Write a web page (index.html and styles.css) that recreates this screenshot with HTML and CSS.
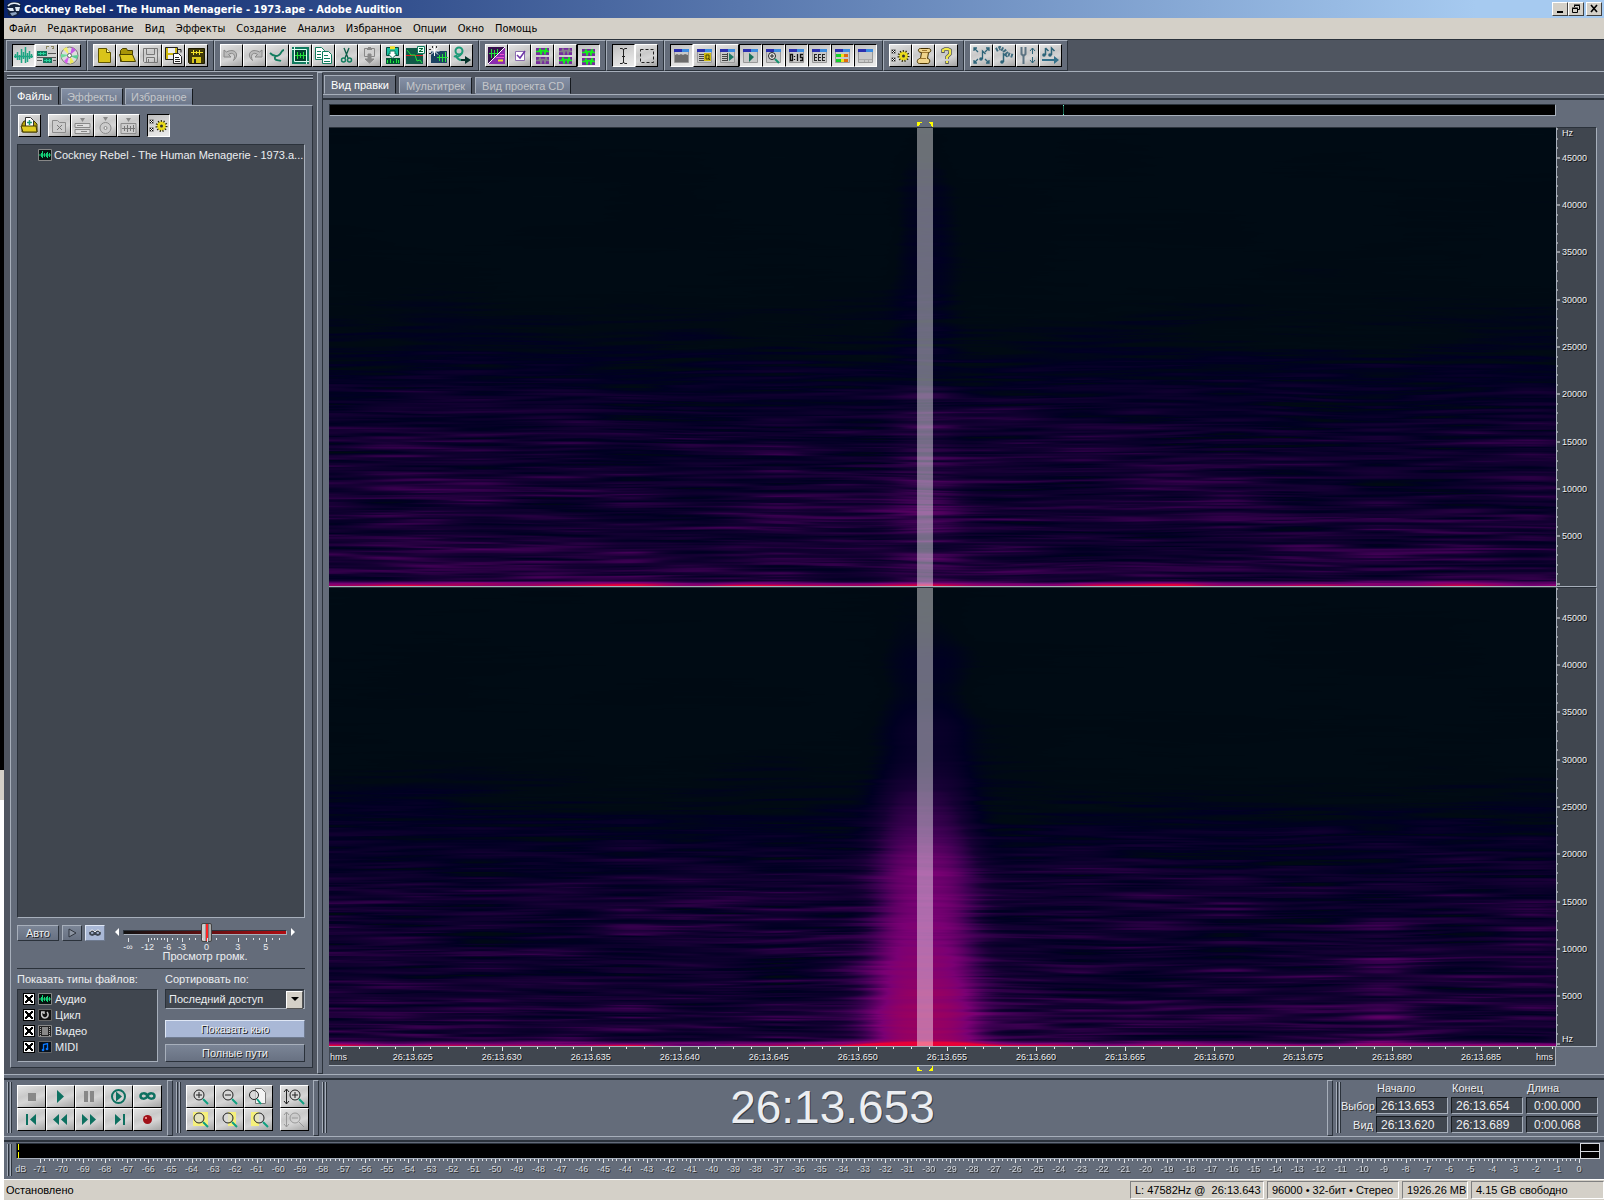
FILE: index.html
```html
<!DOCTYPE html>
<html lang="ru">
<head>
  <meta charset="UTF-8">
  <meta name="viewport" content="width=device-width, initial-scale=1.0">
  <title>Cockney Rebel - The Human Menagerie - 1973.ape - Adobe Audition</title>
  <link rel="stylesheet" href="styles.css">
</head>
<body>

  <!-- icon sheet -->
  <svg class="sheet" aria-hidden="true">
    <symbol id="wave" viewBox="0 0 21 21"><path d="M2.500 9v4M4.500 7v8M6.500 10v5M8.500 4v14M10.500 7v7M12.500 2v16M14.500 8v9M16.500 6v8M18.500 9v4M1 11.500h19" stroke="#1fa583" stroke-width="1.500"/></symbol>
    <symbol id="tracks" viewBox="0 0 21 21"><path d="M1 6h10v5H1zM7 13h9v5H7z" fill="#12795f"/><path d="M2 8.500h8M8 15.500h7M4.500 7v3M7.500 7v3M10.500 14v3M13.500 14v3" stroke="#27d39c"/><path d="M10 1h3v1h-2v2h-1zM15 1h3v3h-2V3h1V2h-2z" fill="#8a8560"/><path d="M12 8.500h8M1 15.500h5M17 15.500h3M1 12.500h19" stroke="#555"/></symbol>
    <symbol id="cd" viewBox="0 0 21 21"><circle cx="10.500" cy="10.500" r="8.500" fill="#ddd" stroke="#777"/><path d="M10 10L4 4l4-2z" fill="#f3f06a"/><path d="M11 10l2-8 4 3z" fill="#c45ae6"/><path d="M11 11l8-1-1 4z" fill="#58cf92"/><path d="M10 11l-2 8-3-3z" fill="#d65cf0"/><path d="M11 11l4 6-4 2z" fill="#eee95a"/><path d="M10 10l-8-1v4z" fill="#6fdc9c"/><circle cx="10.500" cy="10.500" r="2" fill="#fff" stroke="#666"/></symbol>
    <symbol id="new" viewBox="0 0 21 21"><path d="M4.500 3.500h8l4 4v10h-12z" fill="#d9c41a" stroke="#5e5400"/><path d="M12.500 3.500v4h4" fill="#fff6a0" stroke="#5e5400"/></symbol>
    <symbol id="open" viewBox="0 0 21 21"><path d="M3.500 16.500v-11l2-2h4l1 2h5v11z" fill="#a89408" stroke="#4a4200"/><path d="M4.500 16.500l-2-7h13l3 7z" fill="#dcc61c" stroke="#4a4200"/></symbol>
    <symbol id="save" viewBox="0 0 21 21"><path d="M3.500 3.500h14v14h-13l-1-1zM6.500 3.500v6h8v-6M6.500 17.500v-5h8v5" fill="none" stroke="#777"/><path d="M8.500 14v3" stroke="#777"/></symbol>
    <symbol id="saveas" viewBox="0 0 21 21"><path d="M2.500 2.500h12v12h-12z" fill="#cdb710" stroke="#222"/><path d="M5 3h7v5H5zM5 10h6v4H5z" fill="#eee"/><path d="M10.500 8.500h5l3 3v7h-8z" fill="#fff" stroke="#222"/><path d="M12 12.500h4M12 14.500h5M12 16.500h5M15 4.500h3v3" stroke="#222" fill="none"/></symbol>
    <symbol id="saveall" viewBox="0 0 21 21"><path d="M2.500 3.500h16v15h-15l-1-1z" fill="#403a08" stroke="#1d1a00"/><path d="M5 7.500h12M7.500 5v5M10.500 6v3M13.500 5v5" stroke="#f2e12a"/><path d="M6 12h9v6H6z" fill="#d9c61c"/><path d="M8 14h2v4H8z" fill="#222"/></symbol>
    <symbol id="undo" viewBox="0 0 21 21"><path d="M3 5v7h7l-2.500-2.500c4-3 8 0 5 6 7-6 1-13-7-8.500z" fill="#bbb" stroke="#888"/></symbol>
    <symbol id="redo" viewBox="0 0 21 21"><path d="M18 5v7h-7l2.500-2.500c-4-3-8 0-5 6-7-6-1-13 7-8.500z" fill="#bbb" stroke="#888"/></symbol>
    <symbol id="repeat" viewBox="0 0 21 21"><path d="M3 8c3 3 6 4 9 2s2-5 5-5M12 10c-3 1-5 2-4 4s4 1 6 2" fill="none" stroke="#127c5e" stroke-width="1.800"/></symbol>
    <symbol id="trim" viewBox="0 0 21 21"><path d="M2 2h17v17H2z" fill="#0f7a5e"/><path d="M5 5h11v11H5z" fill="#05402f"/><path d="M5 10.500h12M7.500 7v7M10.500 8v5M13.500 7v7" stroke="#22e23a"/><path d="M4.500 2v14.500H19M2 4.500h14.500V19" fill="none" stroke="#d9fff0"/></symbol>
    <symbol id="copy" viewBox="0 0 21 21"><path d="M2.500 2.500h6l3 3v9h-9z" fill="#fff" stroke="#127c5e"/><path d="M9.500 6.500h6l3 3v9h-9z" fill="#fff" stroke="#127c5e"/><path d="M4 6.500h4M4 9.500h4M4 12.500h4M11 10.500h4M11 13.500h6M11 16.500h6" stroke="#127c5e"/></symbol>
    <symbol id="cut" viewBox="0 0 21 21"><path d="M8 3l4 10M13 3L9 13" stroke="#0d5c48" stroke-width="1.300"/><circle cx="7.500" cy="15" r="2" fill="none" stroke="#127c5e" stroke-width="1.500"/><circle cx="13.500" cy="15" r="2" fill="none" stroke="#127c5e" stroke-width="1.500"/></symbol>
    <symbol id="paste" viewBox="0 0 21 21"><path d="M5.500 3.500h10v8h-10z" fill="#d0d0d0" stroke="#888"/><path d="M8 4.500h5M9 2.500h3M9 9h3v5h3l-4.500 4L6 14h3z" fill="#888" stroke="#888"/></symbol>
    <symbol id="pastenew" viewBox="0 0 21 21"><path d="M4.500 2.500h12v8h-12z" fill="#19bfa0" stroke="#08473a"/><path d="M8 3.500h5M8 2h5" stroke="#f3e02a" stroke-width="1.500"/><path d="M4 13h14v6H4z" fill="#053"/><path d="M5.500 18v-3M8.500 18v-4M11.500 18v-2M14.500 18v-4M16.500 18v-3" stroke="#22e23a"/><path d="M8 6h5v3h2l-4.500 4L6 9h2z" fill="#fff" stroke="#127c5e"/></symbol>
    <symbol id="zero" viewBox="0 0 21 21"><path d="M1 3h17v16H1z" fill="#0f5a48"/><path d="M1 10.500h17" stroke="#e02020"/><path d="M2 5l4 5h4l2 6 3-1 2 3" fill="none" stroke="#22e23a"/><path d="M12.500 1.500h7v7h-7z" fill="#e9fff8" stroke="#127c5e"/><path d="M14 3.500h4l-4 3h4" fill="none" stroke="#063"/></symbol>
    <symbol id="noise" viewBox="0 0 21 21"><path d="M3 6h16v12H3z" fill="#1b4262"/><path d="M9 12.500h11M11.500 10v6M14.500 9v8M17.500 7v10" stroke="#22e23a"/><path d="M6.500 1v10M1.500 6h10M3 2.500l7 7M10 2.500l-7 7" stroke="#fff"/><path d="M4.500 1v2M8.500 1v2M1 4.500h2M1 8.500h2" stroke="#333"/></symbol>
    <symbol id="convert" viewBox="0 0 21 21"><circle cx="8" cy="6" r="3.500" fill="none" stroke="#1c9b78" stroke-width="2"/><path d="M3 11c3 2 6 0 8-3M5 10c1 5 4 5 6 5" fill="none" stroke="#1c9b78" stroke-width="2"/><path d="M10 14h4v-3l6 4-6 4v-3h-4z" fill="#04332a"/></symbol>
    <symbol id="specview" viewBox="0 0 21 21"><path d="M2 2h17v17H2z" fill="#8b2ab0"/><path d="M2 2h17L2 19z" fill="#35104c"/><path d="M3 8.500h9M5.500 4v9M8.500 5v7M11.500 4v5" stroke="#22e23a"/><path d="M2 19L19 2" stroke="#fff"/><path d="M12 15.500h5" stroke="#f3e02a" stroke-width="2"/><path d="M14 9.500h4M10 12.500h8" stroke="#f050d0"/></symbol>
    <symbol id="check" viewBox="0 0 21 21"><path d="M6.500 6.500h9v9h-9z" fill="#fff" stroke="#8c6fb0"/><path d="M8 10l3 3 5-7" fill="none" stroke="#6d35a8" stroke-width="1.500"/></symbol>
    <symbol id="blip" viewBox="0 0 13 7"><path d="M0 3.500h3l1-3 1 6 1-4h2l1 3 1-5 1 3h2" fill="none" stroke-width="1.600"/></symbol>
    <symbol id="chan-l" viewBox="0 0 21 21"><path d="M4 3h13v7H4zM4 12h13v7H4z" fill="#762a9e"/><use href="#blip" x="4" y="3" width="13" height="7" stroke="#14ef1c"/><use href="#blip" x="4" y="12" width="13" height="7" stroke="#85808a"/></symbol>
    <symbol id="chan-r" viewBox="0 0 21 21"><path d="M4 3h13v7H4zM4 12h13v7H4z" fill="#762a9e"/><use href="#blip" x="4" y="3" width="13" height="7" stroke="#85808a"/><use href="#blip" x="4" y="12" width="13" height="7" stroke="#14ef1c"/></symbol>
    <symbol id="chan-b" viewBox="0 0 21 21"><path d="M4 4h13v7H4zM4 13h13v7H4z" fill="#762a9e"/><use href="#blip" x="4" y="4" width="13" height="7" stroke="#14ef1c"/><use href="#blip" x="4" y="13" width="13" height="7" stroke="#14ef1c"/></symbol>
    <symbol id="ibeam" viewBox="0 0 21 21"><path d="M7 3.500h2l1.500 1 1.500-1h2M7 18.500h2l1.500-1 1.500 1h2M10.500 4v14M9 11.500h3" fill="none" stroke="#222"/></symbol>
    <symbol id="marquee" viewBox="0 0 21 21"><path d="M4.500 4.500h13v13h-13z" fill="none" stroke="#222" stroke-dasharray="3 2"/></symbol>
    <symbol id="win" viewBox="0 0 21 21"><path d="M3.500 4.500h14v13h-14z" fill="#c9c9c9" stroke="#999"/><path d="M3 4h8v3H3z" fill="#2a2fb0"/><path d="M11 4h7v3h-7z" fill="#3b8be0"/></symbol>
    <symbol id="win-files" viewBox="0 0 21 21"><use href="#win"/><path d="M4 10l2-1 2 1 2-1 2 1 2-1 3 1v7H4z" fill="#6c6c6c"/></symbol>
    <symbol id="win-cue" viewBox="0 0 21 21"><use href="#win"/><path d="M5 9.500h6M5 11.500h5M5 13.500h5M5 15.500h6" stroke="#444"/><path d="M10 8h7v8h-7z" fill="#cdbb12"/><path d="M12 10h3v4h-3zM14 13l2 2" fill="none" stroke="#4c4400"/></symbol>
    <symbol id="win-list" viewBox="0 0 21 21"><use href="#win"/><path d="M5 9.500h6M5 11.500h5M5 13.500h5M5 15.500h6M10.500 8v8" stroke="#444"/><path d="M12 8l5 4-5 4z" fill="#1c7a66"/></symbol>
    <symbol id="win-play" viewBox="0 0 21 21"><use href="#win"/><path d="M9 8l5 4-5 5z" fill="#17705a"/></symbol>
    <symbol id="win-zoom" viewBox="0 0 21 21"><use href="#win"/><circle cx="9" cy="11" r="3.500" fill="#eee" stroke="#222"/><path d="M7 11h4M9 9v4" stroke="#222"/><path d="M12 14l4 4" stroke="#139370" stroke-width="2"/></symbol>
    <symbol id="win-time" viewBox="0 0 21 21"><use href="#win"/><path d="M4.500 9.500h2v6h-2zM8.500 11v1M8.500 14v1M11.500 9v7M17 9.500h-2.500v3h2v3h-2.500" fill="none" stroke="#111" stroke-width="1.300"/></symbol>
    <symbol id="win-sel" viewBox="0 0 21 21"><use href="#win"/><path d="M5 9.500h3M5 12.500h3M5 15.500h3M9 9.500h3M9 12.500h3M9 15.500h3M13 9.500h3M13 12.500h3M13 15.500h3M5.500 9v7M9.500 9v7M13.500 9v7" stroke="#222"/></symbol>
    <symbol id="win-level" viewBox="0 0 21 21"><use href="#win"/><path d="M4 9h5v3H4zM4 14h5v3H4z" fill="#12d22a"/><path d="M9 9h3v3H9zM9 14h3v3H9z" fill="#f2e020"/><path d="M12 9h4v3h-4zM12 14h4v3h-4z" fill="#e06a10"/></symbol>
    <symbol id="win-status" viewBox="0 0 21 21"><use href="#win"/><path d="M4 14.500h13M9.500 15v2M13.500 15v2" stroke="#aaa"/></symbol>
    <symbol id="gear" viewBox="0 0 21 21"><path d="M1.500 4.500h4v4h-4zM1.500 12.500h4v4h-4z" fill="#eee" stroke="#999"/><path d="M2 5l3 3M5 5L2 8M2 13l3 3M5 13l-3 3" stroke="#111"/><circle cx="13.500" cy="11" r="4.500" fill="#e8da1c" stroke="#2c2800" stroke-width="3" stroke-dasharray="1 1.500"/><circle cx="13.500" cy="11" r="4" fill="#e8da1c"/><circle cx="13.500" cy="11" r="1.500" fill="#333"/></symbol>
    <symbol id="script" viewBox="0 0 21 21"><path d="M7.500 3.500h8c3 0 3 4 0 4l-1 6c3 0 3 5 0 5h-8c-3 0-3-4 0-5h1l1-6c-4 0-4-4-1-4z" fill="#f0d48c" stroke="#473200"/><path d="M9 7.500h6M7 13.500h6M9 5.500h5" stroke="#a07830"/></symbol>
    <symbol id="help" viewBox="0 0 21 21"><path d="M7 8V5l2-1h3l2 1v4l-3 3v2M11 16v3" fill="none" stroke="#555" stroke-width="3.500"/><path d="M7 7V5l2-1h3l2 1v4l-3 3v2M11 16v2" fill="none" stroke="#f0e94a" stroke-width="2"/></symbol>
    <symbol id="note-out" viewBox="0 0 21 21"><path d="M3 6V3h3M15 3h3v3M3 15v3h3M18 15v3h-3M3 3l4 4M18 3l-4 4M3 18l4-4M18 18l-4-4M11.500 14V6l3 3" fill="none" stroke="#2d6479" stroke-width="1.300"/><circle cx="10" cy="14" r="1.800" fill="#2d6479"/></symbol>
    <symbol id="note-bend" viewBox="0 0 21 21"><path d="M2 5l4-2 4 2 3 4 6 2" fill="none" stroke="#3f6d80" stroke-width="4" stroke-dasharray="2 1"/><path d="M9.500 17V9l4 3" fill="none" stroke="#2d6479" stroke-width="1.500"/><circle cx="8" cy="17" r="1.800" fill="#2d6479"/></symbol>
    <symbol id="fork" viewBox="0 0 21 21"><path d="M4.500 2v7l2 2 2-2V2M6.500 11v8" fill="none" stroke="#5d7483" stroke-width="2"/><path d="M15.500 3v6M13 6l2.500-3L18 6M15.500 12v6M13 15l2.500 3 2.500-3" fill="none" stroke="#2d6479"/></symbol>
    <symbol id="note-move" viewBox="0 0 21 21"><path d="M5.500 10V3M11.500 10V3l3 3M5.500 3l3 3" fill="none" stroke="#2d6479" stroke-width="1.500"/><circle cx="4" cy="10" r="1.800" fill="#2d6479"/><circle cx="10" cy="10" r="1.800" fill="#2d6479"/><path d="M2 14h12v-3l5 4-5 4v-3H2z" fill="#33708a"/></symbol>
    <symbol id="import" viewBox="0 0 21 21"><path d="M3 17V9l2-3h10l3 3v8z" fill="#b5a00c" stroke="#453d00"/><path d="M6.500 2.500h5l3 3v6h-8z" fill="#fff" stroke="#333"/><path d="M10.500 5v5M8 7.500h5" stroke="#1d9878" stroke-width="1.500"/><path d="M2 11h15l1 6H4z" fill="#e0cc22" stroke="#453d00"/></symbol>
    <symbol id="close-file" viewBox="0 0 21 21"><path d="M3.500 17.500v-12h5l2 2h6v10z" fill="#ccc" stroke="#8b8b8b"/><path d="M8 10l5 5M13 10l-5 5" stroke="#777"/></symbol>
    <symbol id="ins-multi" viewBox="0 0 21 21"><path d="M3 8.500h15v4H3zM3 14.500h15v4H3z" fill="#ddd" stroke="#888"/><path d="M8 3h5l-2.500 4zM5 10h6v1H5zM9 16h6v1H9z" fill="#888"/></symbol>
    <symbol id="ins-cd" viewBox="0 0 21 21"><circle cx="10.500" cy="13" r="5.500" fill="#ccc" stroke="#8b8b8b"/><circle cx="10.500" cy="13" r="1.500" fill="#eee" stroke="#888"/><path d="M8 2h5l-2.500 4z" fill="#888"/></symbol>
    <symbol id="ins-wave" viewBox="0 0 21 21"><path d="M3 8.500h15v10H3z" fill="#ccc" stroke="#8b8b8b"/><path d="M8 3h5l-2.500 4z" fill="#888"/><path d="M4 13.500h13M6.500 11v5M9.500 10v7M12.500 11v5M15.500 10v7" stroke="#777"/></symbol>
    <symbol id="f-audio" viewBox="0 0 14 12"><path d="M.5.500h13v11H.5z" fill="#061410" stroke="#888"/><path d="M1 6h12M3.500 4v4M4.500 2v7M6.500 4v4M8.500 4v4M9.500 3v6M11.500 4v4" stroke="#12d478"/></symbol>
    <symbol id="f-loop" viewBox="0 0 14 12"><path d="M.5.500h13v11H.5z" fill="#111" stroke="#666"/><path d="M4 3c-1 3 0 6 3 6s4-4 2-6M3 3h3v2" fill="none" stroke="#ccc" stroke-width="1.500"/></symbol>
    <symbol id="f-video" viewBox="0 0 14 12"><path d="M.5.500h13v11H.5z" fill="#222" stroke="#888"/><path d="M4 2h6v8H4z" fill="#888"/><path d="M2.500 2v9M11.500 2v9" stroke="#aaa" stroke-dasharray="1 1"/></symbol>
    <symbol id="f-midi" viewBox="0 0 14 12"><path d="M.5.500h13v11H.5z" fill="#05101d" stroke="#666"/><path d="M5.500 9V3.500l4-1V8" fill="none" stroke="#0a78ff" stroke-width="1.300"/><circle cx="5" cy="9" r="1.300" fill="#0a78ff"/><circle cx="9" cy="8" r="1.300" fill="#0a78ff"/></symbol>
    <symbol id="t-stop" viewBox="0 0 27 21"><path d="M10 7h8v8h-8z" fill="#888"/></symbol>
    <symbol id="t-play" viewBox="0 0 27 21"><path d="M10 4l7 6.500-7 6.500z" fill="#0d7060"/></symbol>
    <symbol id="t-pause" viewBox="0 0 27 21"><path d="M8 5h4v11H8zM14 5h4v11h-4z" fill="#888"/></symbol>
    <symbol id="t-playend" viewBox="0 0 27 21"><circle cx="13.500" cy="10.500" r="6.500" fill="none" stroke="#0d7060" stroke-width="2"/><path d="M11 5.500l6 5-6 5z" fill="#0d7060"/></symbol>
    <symbol id="t-loop" viewBox="0 0 27 21"><path d="M13.500 10c-2-4-7-3-7 0s5 4 7 0 7-3 7 0-5 4-7 0z" fill="none" stroke="#0d7060" stroke-width="2.500"/></symbol>
    <symbol id="t-first" viewBox="0 0 27 21"><path d="M8 5h2v11H8zM18 5v11l-6-5.500z" fill="#0d7060"/></symbol>
    <symbol id="t-rew" viewBox="0 0 27 21"><path d="M12 5v11l-6-5.500zM20 5v11l-6-5.500z" fill="#0d7060"/></symbol>
    <symbol id="t-fwd" viewBox="0 0 27 21"><path d="M6 5v11l6-5.500zM14 5v11l6-5.500z" fill="#0d7060"/></symbol>
    <symbol id="t-last" viewBox="0 0 27 21"><path d="M10 5v11l6-5.500zM18 5h2v11h-2z" fill="#0d7060"/></symbol>
    <symbol id="t-rec" viewBox="0 0 27 21"><circle cx="13.500" cy="10.500" r="4.500" fill="#a01018"/><path d="M11 8h2v2h-2z" fill="#e88"/></symbol>
    <symbol id="lens" viewBox="0 0 27 21"><circle cx="12" cy="9" r="5" fill="#ddd" fill-opacity=".7" stroke="#222"/><path d="M16 13l5 5" stroke="#0ea080" stroke-width="2"/></symbol>
    <symbol id="z-in" viewBox="0 0 27 21"><use href="#lens"/><path d="M9 9h6M12 6v6" stroke="#222"/></symbol>
    <symbol id="z-out" viewBox="0 0 27 21"><use href="#lens"/><path d="M9 9h6" stroke="#222"/></symbol>
    <symbol id="z-full" viewBox="0 0 27 21"><path d="M10.500 2.500h6l4 4v11h-10z" fill="#f4f4f4" stroke="#777"/><circle cx="9" cy="9" r="4.500" fill="#ddd" fill-opacity=".7" stroke="#222"/><path d="M12 13l4 5" stroke="#0ea080" stroke-width="2"/></symbol>
    <symbol id="z-sel" viewBox="0 0 27 21"><path d="M6 3h15v14H6z" fill="#f5f07c"/><use href="#lens"/></symbol>
    <symbol id="z-right" viewBox="0 0 27 21"><path d="M12 3h8v14h-8z" fill="#f5f07c"/><use href="#lens"/></symbol>
    <symbol id="z-left" viewBox="0 0 27 21"><path d="M6 3h8v14H6z" fill="#f5f07c"/><use href="#lens" x="2"/></symbol>
    <symbol id="z-vin" viewBox="0 0 27 21"><path d="M5.500 3v15M3 6l2.500-3L8 6M3 15l2.500 3L8 15" fill="none" stroke="#222"/><use href="#lens" x="2"/><path d="M11 9h6M14 6v6" stroke="#222"/></symbol>
    <symbol id="z-vout" viewBox="0 0 27 21"><path d="M5.500 3v15M3 6l2.500-3L8 6M3 15l2.500 3L8 15M11 9h6M18 13l5 5" fill="none" stroke="#999"/><circle cx="14" cy="9" r="5" fill="none" stroke="#999"/></symbol>
  </svg>

  <div class="desktop-edge"></div>

  <div class="app">
    <header class="title-bar">
      <svg class="app-icon" viewBox="0 0 16 16"><path d="M1 3l4-2h9l1 4-2 8-5 3-6-2z" fill="#14233d"/><path d="M2 5c2-3 9-4 12-1" fill="none" stroke="#e8eef5" stroke-width="1.500"/><path d="M1 7h6l1 3H4zM9 6h5l-1 4h-3z" fill="#dfe8f2"/><path d="M4 12l6-1 1 2-5 2z" fill="#8da4c4"/></svg>
      <h1>Cockney Rebel - The Human Menagerie - 1973.ape - Adobe Audition</h1>
      <div class="window-buttons">
        <button type="button" aria-label="Свернуть"><svg viewBox="0 0 12 10"><path d="M3 7h6v2H3z"/></svg></button>
        <button type="button" aria-label="Восстановить"><svg viewBox="0 0 12 10"><path d="M4.500 3V1.500h5v4H8M2.500 4.500h5v4h-5zM4 1h6M2 4h6" fill="none" stroke="#000"/></svg></button>
        <button type="button" class="close" aria-label="Закрыть"><svg viewBox="0 0 12 10"><path d="M3 1l6 7M9 1L3 8" stroke="#000" stroke-width="1.600"/></svg></button>
      </div>
    </header>

    <nav class="menu-bar">
      <button type="button">Файл</button>
      <button type="button">Редактирование</button>
      <button type="button">Вид</button>
      <button type="button">Эффекты</button>
      <button type="button">Создание</button>
      <button type="button">Анализ</button>
      <button type="button">Избранное</button>
      <button type="button">Опции</button>
      <button type="button">Окно</button>
      <button type="button">Помощь</button>
    </nav>

    <div class="toolbar">
      <div class="tool-group">
        <button type="button" class="tool on" aria-label="Правка"><svg><use href="#wave"/></svg></button>
        <button type="button" class="tool" aria-label="Мультитрек"><svg><use href="#tracks"/></svg></button>
        <button type="button" class="tool" aria-label="CD"><svg><use href="#cd"/></svg></button>
      </div>
      <div class="tool-group">
        <button type="button" class="tool" aria-label="Новый"><svg><use href="#new"/></svg></button>
        <button type="button" class="tool" aria-label="Открыть"><svg><use href="#open"/></svg></button>
        <button type="button" class="tool" aria-label="Сохранить"><svg><use href="#save"/></svg></button>
        <button type="button" class="tool" aria-label="Сохранить как"><svg><use href="#saveas"/></svg></button>
        <button type="button" class="tool" aria-label="Сохранить все"><svg><use href="#saveall"/></svg></button>
      </div>
      <div class="tool-group">
        <button type="button" class="tool" aria-label="Отменить"><svg><use href="#undo"/></svg></button>
        <button type="button" class="tool" aria-label="Вернуть"><svg><use href="#redo"/></svg></button>
        <button type="button" class="tool" aria-label="Повторить"><svg><use href="#repeat"/></svg></button>
        <button type="button" class="tool" aria-label="Обрезать"><svg><use href="#trim"/></svg></button>
        <button type="button" class="tool" aria-label="Копировать"><svg><use href="#copy"/></svg></button>
        <button type="button" class="tool" aria-label="Вырезать"><svg><use href="#cut"/></svg></button>
        <button type="button" class="tool" aria-label="Вставить"><svg><use href="#paste"/></svg></button>
        <button type="button" class="tool" aria-label="Вставить в новый"><svg><use href="#pastenew"/></svg></button>
        <button type="button" class="tool" aria-label="Нулевые точки"><svg><use href="#zero"/></svg></button>
        <button type="button" class="tool" aria-label="Шумоподавление"><svg><use href="#noise"/></svg></button>
        <button type="button" class="tool" aria-label="Преобразовать"><svg><use href="#convert"/></svg></button>
      </div>
      <div class="tool-group">
        <button type="button" class="tool" aria-label="Спектр"><svg><use href="#specview"/></svg></button>
        <button type="button" class="tool" aria-label="Отметка"><svg><use href="#check"/></svg></button>
        <button type="button" class="tool" aria-label="Левый канал"><svg><use href="#chan-l"/></svg></button>
        <button type="button" class="tool" aria-label="Правый канал"><svg><use href="#chan-r"/></svg></button>
        <button type="button" class="tool on" aria-label="Оба канала"><svg><use href="#chan-b"/></svg></button>
      </div>
      <div class="tool-group">
        <button type="button" class="tool on" aria-label="Выделение времени"><svg><use href="#ibeam"/></svg></button>
        <button type="button" class="tool" aria-label="Рамка"><svg><use href="#marquee"/></svg></button>
      </div>
      <div class="tool-group">
        <button type="button" class="tool on" aria-label="Окно файлов"><svg><use href="#win-files"/></svg></button>
        <button type="button" class="tool" aria-label="Список кью"><svg><use href="#win-cue"/></svg></button>
        <button type="button" class="tool" aria-label="Список воспроизведения"><svg><use href="#win-list"/></svg></button>
        <button type="button" class="tool on" aria-label="Транспорт"><svg><use href="#win-play"/></svg></button>
        <button type="button" class="tool on" aria-label="Масштаб"><svg><use href="#win-zoom"/></svg></button>
        <button type="button" class="tool on" aria-label="Время"><svg><use href="#win-time"/></svg></button>
        <button type="button" class="tool on" aria-label="Выбор и вид"><svg><use href="#win-sel"/></svg></button>
        <button type="button" class="tool on" aria-label="Уровни"><svg><use href="#win-level"/></svg></button>
        <button type="button" class="tool on" aria-label="Строка состояния"><svg><use href="#win-status"/></svg></button>
      </div>
      <div class="tool-group">
        <button type="button" class="tool" aria-label="Настройки"><svg><use href="#gear"/></svg></button>
        <button type="button" class="tool" aria-label="Сценарии"><svg><use href="#script"/></svg></button>
        <button type="button" class="tool" aria-label="Справка"><svg><use href="#help"/></svg></button>
      </div>
      <div class="tool-group">
        <button type="button" class="tool" aria-label="Растяжение"><svg><use href="#note-out"/></svg></button>
        <button type="button" class="tool" aria-label="Изгиб"><svg><use href="#note-bend"/></svg></button>
        <button type="button" class="tool" aria-label="Высота тона"><svg><use href="#fork"/></svg></button>
        <button type="button" class="tool" aria-label="Сдвиг"><svg><use href="#note-move"/></svg></button>
      </div>
    </div>

    <div class="middle">
      <aside class="dock">
        <div class="grip-h"></div>
        <div class="tabs">
          <button type="button" class="tab active">Файлы</button>
          <button type="button" class="tab">Эффекты</button>
          <button type="button" class="tab">Избранное</button>
        </div>
        <div class="organizer">
          <div class="file-tools">
            <button type="button" class="tool" aria-label="Импорт"><svg><use href="#import"/></svg></button>
            <div class="file-tools-set">
              <button type="button" class="tool" aria-label="Закрыть файл"><svg><use href="#close-file"/></svg></button>
              <button type="button" class="tool" aria-label="В мультитрек"><svg><use href="#ins-multi"/></svg></button>
              <button type="button" class="tool" aria-label="В проект CD"><svg><use href="#ins-cd"/></svg></button>
              <button type="button" class="tool" aria-label="Правка файла"><svg><use href="#ins-wave"/></svg></button>
            </div>
            <button type="button" class="tool on" aria-label="Параметры"><svg><use href="#gear"/></svg></button>
          </div>

          <ul class="file-list">
            <li><svg class="file-icon"><use href="#f-audio"/></svg>Cockney Rebel - The Human Menagerie - 1973.a...</li>
          </ul>

          <div class="preview">
            <button type="button" class="flat auto">Авто</button>
            <button type="button" class="flat small" aria-label="Воспроизвести"><svg viewBox="0 0 18 14"><path d="M6 3l7 4-7 4z" fill="#8c94a2" stroke="#2f353e"/></svg></button>
            <button type="button" class="flat small lit" aria-label="Цикл"><svg viewBox="0 0 18 14"><path d="M9 7c-2-3-5-2-5 0s3 3 5 0 5-2 5 0-3 3-5 0z" fill="none" stroke="#3c4450" stroke-width="2"/><path d="M9 6c-2-3-5-2-5 0M9 6c2-3 5-2 5 0" fill="none" stroke="#fff"/></svg></button>
            <div class="volume">
              <div class="volume-row">
                <i class="arrow left"></i>
                <input type="range" id="volume" min="0" max="100" value="51">
                <i class="arrow right"></i>
              </div>
              <div class="volume-scale" id="volumeScale"></div>
              <label for="volume">Просмотр громк.</label>
            </div>
          </div>

          <div class="filters">
            <fieldset class="types">
              <legend>Показать типы файлов:</legend>
              <div class="types-box">
                <label><input type="checkbox" checked><svg class="file-icon"><use href="#f-audio"/></svg>Аудио</label>
                <label><input type="checkbox" checked><svg class="file-icon"><use href="#f-loop"/></svg>Цикл</label>
                <label><input type="checkbox" checked><svg class="file-icon"><use href="#f-video"/></svg>Видео</label>
                <label><input type="checkbox" checked><svg class="file-icon"><use href="#f-midi"/></svg>MIDI</label>
              </div>
            </fieldset>
            <div class="sorting">
              <label for="sort">Сортировать по:</label>
              <div class="select-box">
                <select id="sort"><option>Последний доступ</option></select>
              </div>
              <button type="button" class="flat lit wide">Показать кью</button>
              <button type="button" class="flat wide">Полные пути</button>
            </div>
          </div>
        </div>
      </aside>

      <div class="splitter-v"></div>

      <main class="editor">
        <div class="tabs view-tabs">
          <button type="button" class="tab active">Вид правки</button>
          <button type="button" class="tab">Мультитрек</button>
          <button type="button" class="tab">Вид проекта CD</button>
        </div>
        <div class="splitter-h"></div>
        <div class="workspace">
          <div class="overview"><i></i></div>
          <div class="marks top"><i></i></div>
          <div class="channel"><canvas id="left"></canvas><i class="selection"></i></div>
          <div class="ruler-f" data-unit="top"></div>
          <div class="channel"><canvas id="right"></canvas><i class="selection"></i></div>
          <div class="ruler-f" data-unit="bottom"></div>
          <div class="ruler-t" id="timeRuler"><span class="unit">hms</span><span class="unit">hms</span></div>
          <div class="marks bottom"><i></i></div>
        </div>
      </main>
    </div>

    <div class="splitter-h"></div>

    <div class="panels">
      <div class="grip-v"></div>
      <div class="transport">
        <button type="button" class="tool" aria-label="Стоп"><svg><use href="#t-stop"/></svg></button>
        <button type="button" class="tool" aria-label="Пуск"><svg><use href="#t-play"/></svg></button>
        <button type="button" class="tool" aria-label="Пауза"><svg><use href="#t-pause"/></svg></button>
        <button type="button" class="tool" aria-label="До конца"><svg><use href="#t-playend"/></svg></button>
        <button type="button" class="tool" aria-label="По кругу"><svg><use href="#t-loop"/></svg></button>
        <button type="button" class="tool" aria-label="В начало"><svg><use href="#t-first"/></svg></button>
        <button type="button" class="tool" aria-label="Назад"><svg><use href="#t-rew"/></svg></button>
        <button type="button" class="tool" aria-label="Вперед"><svg><use href="#t-fwd"/></svg></button>
        <button type="button" class="tool" aria-label="В конец"><svg><use href="#t-last"/></svg></button>
        <button type="button" class="tool" aria-label="Запись"><svg><use href="#t-rec"/></svg></button>
      </div>
      <div class="splitter-v"></div>
      <div class="grip-v"></div>
      <div class="zoom">
        <button type="button" class="tool" aria-label="Крупнее"><svg><use href="#z-in"/></svg></button>
        <button type="button" class="tool" aria-label="Мельче"><svg><use href="#z-out"/></svg></button>
        <button type="button" class="tool" aria-label="Целиком"><svg><use href="#z-full"/></svg></button>
        <button type="button" class="tool" aria-label="К выделению"><svg><use href="#z-sel"/></svg></button>
        <button type="button" class="tool" aria-label="К правому краю"><svg><use href="#z-right"/></svg></button>
        <button type="button" class="tool" aria-label="К левому краю"><svg><use href="#z-left"/></svg></button>
      </div>
      <div class="zoom vertical">
        <button type="button" class="tool" aria-label="Выше"><svg><use href="#z-vin"/></svg></button>
        <button type="button" class="tool" aria-label="Ниже"><svg><use href="#z-vout"/></svg></button>
      </div>
      <div class="splitter-v"></div>
      <div class="grip-v"></div>
      <div class="clock">26:13.653</div>
      <div class="splitter-v"></div>
      <div class="grip-v tight"></div>
      <div class="sel-view">
        <span></span><span class="head">Начало</span><span class="head">Конец</span><span class="head">Длина</span>
        <span class="side">Выбор</span>
        <input type="text" value="26:13.653" aria-label="Выбор начало">
        <input type="text" value="26:13.654" aria-label="Выбор конец">
        <input type="text" value="0:00.000" class="len" aria-label="Выбор длина">
        <span class="side">Вид</span>
        <input type="text" value="26:13.620" aria-label="Вид начало">
        <input type="text" value="26:13.689" aria-label="Вид конец">
        <input type="text" value="0:00.068" class="len" aria-label="Вид длина">
      </div>
    </div>

    <div class="splitter-h"></div>

    <div class="levels">
      <div class="grip-v"></div>
      <div class="meter">
        <div class="meter-row">
          <div class="meter-bar"><i></i></div>
          <div class="clip"><i></i><i></i></div>
        </div>
        <div class="meter-scale" id="dbRuler"></div>
      </div>
    </div>

    <footer class="status-bar">
      <span class="state">Остановлено</span>
      <span class="cell pos">L: 47582Hz @ &nbsp;26:13.643</span>
      <span class="cell format">96000 • 32-бит • Стерео</span>
      <span class="cell size">1926.26 MB</span>
      <span class="cell free">4.15 GB свободно</span>
    </footer>
  </div>

  <script src="script.js"></script>
</body>
</html>
```
FILE: styles.css
```css
* {
  margin: 0;
  padding: 0;
  box-sizing: border-box;
}

:root {
  --panel: #646c7a;
  --frame: #4f5560;
  --well: #40464f;
  --light: #a7afbb;
  --dark: #2b323b;
  --text: #eceef1;
  --menu: #d4d0c8;
}

body {
  display: flex;
  height: 100vh;
  overflow: hidden;
  background: var(--menu);
  font-family: "Liberation Sans", Arial, sans-serif;
  font-size: 11px;
  color: var(--text);
}

button,
input,
select {
  font: inherit;
  color: inherit;
  border: none;
  background: none;
}

svg,
canvas {
  display: block;
}

.sheet {
  position: absolute;
  width: 0;
  height: 0;
}

.desktop-edge {
  flex: none;
  width: 4px;
  background: linear-gradient(#000 64.2%, #d4d0c8 64.2% 66.7%, #fff 66.7%);
}

.app {
  flex: 1;
  min-width: 0;
  display: flex;
  flex-direction: column;
}

/* Title and menu */
.title-bar {
  display: flex;
  align-items: center;
  gap: 2px;
  height: 18px;
  padding: 0 2px;
  background: linear-gradient(to right, #0a246a, #a6caf0 92%);
}

.app-icon {
  width: 16px;
  height: 16px;
}

.title-bar h1 {
  flex: 1;
  font: bold 11px "DejaVu Sans Condensed", "DejaVu Sans", sans-serif;
  color: #fff;
  white-space: nowrap;
}

.window-buttons {
  display: flex;
}

.window-buttons button {
  width: 16px;
  height: 14px;
  padding: 1px;
  background: var(--menu);
  border: 1px solid;
  border-color: #fff #404040 #404040 #fff;
}

.window-buttons .close {
  margin-left: 2px;
}

.menu-bar {
  display: flex;
  gap: 11px;
  height: 21px;
  padding: 0 5px;
  background: var(--menu);
  font: 11px "DejaVu Sans Condensed", "DejaVu Sans", sans-serif;
  color: #000;
}

/* Toolbar */
.toolbar {
  display: flex;
  height: 33px;
  padding-left: 2px;
  background: var(--frame);
  border-top: 1px solid var(--dark);
  border-bottom: 1px solid var(--light);
}

.tool-group {
  display: flex;
  align-items: center;
  padding: 0 5px;
  background: var(--panel);
  border: 1px solid;
  border-color: var(--light) var(--dark) var(--dark) var(--light);
}

.tool {
  display: flex;
  align-items: center;
  justify-content: center;
  width: 23px;
  height: 23px;
  background: linear-gradient(160deg, #e3e3e3, #c9c9c9 40%, #d6d6d6 60%, #a4a4a4);
  border: 1px solid;
  border-color: #fff #000 #000 #fff;
}

.tool svg {
  width: 21px;
  height: 21px;
}

.tool.on {
  background: linear-gradient(160deg, #bdbdbd, #d8d8d8 50%, #ededed);
  border-color: #000 #fff #fff #000;
}

/* Splitters and grips */
.splitter-v {
  flex: none;
  width: 6px;
  background: var(--panel);
  border: 1px solid;
  border-color: var(--light) var(--dark) var(--dark) var(--light);
}

.splitter-h {
  flex: none;
  height: 6px;
  background: var(--panel);
  border-top: 1px solid var(--light);
  border-bottom: 2px solid var(--dark);
}

.grip-h {
  flex: none;
  height: 5px;
  margin: 3px 4px 6px 3px;
  background: linear-gradient(var(--light) 1px, var(--dark) 1px 2px, var(--panel) 2px 3px, var(--light) 3px 4px, var(--dark) 4px);
}

.grip-v {
  flex: none;
  width: 5px;
  margin: 2px 5px 3px 3px;
  background: linear-gradient(to right, var(--light) 1px, var(--dark) 1px 2px, var(--panel) 2px 3px, var(--light) 3px 4px, var(--dark) 4px);
}

.grip-v.tight {
  margin-right: 0;
}

/* Tabs */
.tabs {
  display: flex;
  align-items: flex-end;
  gap: 2px;
}

.tab {
  height: 17px;
  padding: 0 5px;
  background: linear-gradient(#8490a6, #6e788a);
  border: 1px solid;
  border-color: var(--light) #15191e transparent var(--light);
  color: #c4c6ca;
  white-space: nowrap;
}

.tab.active {
  height: 19px;
  padding: 0 6px;
  background: var(--panel);
  color: #fff;
}

/* Left dock */
.middle {
  flex: 1;
  min-height: 0;
  display: flex;
  background: var(--frame);
}

.dock {
  flex: none;
  display: flex;
  flex-direction: column;
  width: 313px;
}

.dock .tabs {
  padding-left: 6px;
}

.organizer {
  flex: 1;
  min-height: 0;
  display: flex;
  flex-direction: column;
  margin: 0 4px 6px 6px;
  padding: 8px 7px 5px 6px;
  background: var(--panel);
  border: 1px solid;
  border-color: var(--light) var(--dark) var(--dark) var(--light);
}

.file-tools {
  display: flex;
  gap: 7px;
  margin-bottom: 7px;
  padding-left: 1px;
}

.file-tools-set {
  display: flex;
}

.file-list {
  flex: 1;
  padding: 3px 0 0 20px;
  list-style: none;
  background: var(--well);
  border: 1px solid;
  border-color: var(--dark) var(--light) var(--light) var(--dark);
  white-space: nowrap;
  overflow: hidden;
}

.file-list li {
  display: flex;
  align-items: center;
  gap: 2px;
  height: 14px;
}

.file-icon {
  width: 14px;
  height: 12px;
}

.preview {
  display: flex;
  align-items: flex-start;
  gap: 3px;
  height: 51px;
  margin: 0 0 4px;
  padding-top: 7px;
  border-bottom: 1px solid var(--dark);
}

.flat {
  height: 16px;
  background: linear-gradient(#7b8596, #687182);
  border: 1px solid;
  border-color: var(--light) var(--dark) var(--dark) var(--light);
  text-shadow: 1px 1px 0 #222;
}

.flat.lit {
  background: #a9b8d6;
  border-color: #dfe7f5 #6f7b90 #6f7b90 #dfe7f5;
}

.auto {
  width: 42px;
}

.small {
  width: 20px;
}

.wide {
  height: 18px;
}

.volume {
  flex: 1;
  margin: 0 10px 0 7px;
  text-align: center;
}

.volume label {
  display: block;
  line-height: 11px;
}

.volume-row {
  display: flex;
  align-items: center;
  gap: 4px;
  height: 14px;
}

.arrow {
  border: 4px solid transparent;
}

.arrow.left {
  border-right-color: #fff;
  border-left-width: 0;
}

.arrow.right {
  border-left-color: #fff;
  border-right-width: 0;
}

.volume input {
  flex: 1;
  min-width: 0;
  height: 18px;
  appearance: none;
}

.volume input::-webkit-slider-runnable-track {
  height: 5px;
  background: linear-gradient(to right, #111, #b00d12);
  border: 1px solid;
  border-color: var(--dark) var(--light) var(--light) var(--dark);
}

.volume input::-webkit-slider-thumb {
  appearance: none;
  width: 11px;
  height: 19px;
  margin-top: -8px;
  background: linear-gradient(to right, #ccc 3px, #999 3px 4px, #f22 4px 6px, #777 6px 7px, #aaa 7px);
  border: 1px solid #444;
  border-radius: 2px;
}

.volume-scale {
  position: relative;
  height: 12px;
  margin: 0 8px;
  font-size: 9px;
}

.volume-scale span {
  position: absolute;
  top: 0;
  padding-top: 3px;
  transform: translateX(-50%);
  line-height: 10px;
}

.volume-scale i {
  position: absolute;
  top: -1px;
  width: 1px;
  height: 2px;
  background: #dfe2e7;
}

.volume-scale .major {
  height: 4px;
}

.filters {
  display: flex;
  gap: 7px;
}

.types {
  width: 141px;
  border: none;
}

.types legend,
.sorting > label {
  display: block;
  height: 16px;
  line-height: 13px;
  white-space: nowrap;
}

.types-box {
  height: 73px;
  padding: 1px 5px;
  background: var(--well);
  border: 1px solid;
  border-color: var(--dark) var(--light) var(--light) var(--dark);
}

.types-box label {
  display: flex;
  align-items: center;
  gap: 3px;
  height: 16px;
}

.types-box input {
  appearance: none;
  width: 12px;
  height: 12px;
  border: 1px solid #000;
  background: #fff;
}

.types-box input:checked {
  background:
    linear-gradient(45deg, transparent 41%, #000 41% 59%, transparent 59%) center / 8px 8px no-repeat,
    linear-gradient(-45deg, transparent 41%, #000 41% 59%, transparent 59%) center / 8px 8px no-repeat,
    #fff;
}

.sorting {
  flex: 1;
  display: flex;
  flex-direction: column;
  gap: 6px;
}

.sorting > label {
  margin-bottom: -6px;
}

.select-box {
  position: relative;
  height: 20px;
  margin-bottom: 5px;
  background: var(--well);
  border: 1px solid;
  border-color: var(--dark) var(--light) var(--light) var(--dark);
}

.select-box select {
  width: 100%;
  height: 18px;
  padding-left: 3px;
  appearance: none;
}

.select-box::before {
  content: "";
  position: absolute;
  top: 1px;
  right: 1px;
  width: 15px;
  height: 16px;
  background: var(--menu);
  border: 1px solid;
  border-color: #fff #555 #555 #fff;
  pointer-events: none;
}

.select-box::after {
  content: "";
  position: absolute;
  top: 7px;
  right: 5px;
  border: 4px solid transparent;
  border-top-color: #000;
  border-bottom-width: 0;
  pointer-events: none;
}

/* Editor */
.editor {
  flex: 1;
  min-width: 0;
  display: flex;
  flex-direction: column;
  background: var(--panel);
}

.view-tabs {
  flex: none;
  gap: 3px;
  height: 22px;
  padding-left: 1px;
  background: var(--frame);
}

.view-tabs .tab {
  padding: 0 6px;
}

.workspace {
  flex: 1;
  min-height: 0;
  display: grid;
  grid-template-columns: minmax(0, 1fr) 41px;
  grid-template-rows: 12px 11px minmax(0, 1fr) minmax(0, 1fr) 19px 8px;
  padding: 4px 7px 0 6px;
}

.overview,
.marks,
.ruler-t {
  grid-column: 1 / -1;
  margin-right: 41px;
}

.overview {
  background: #000;
  border: 1px solid;
  border-color: var(--dark) var(--light) var(--light) var(--dark);
}

.overview i {
  display: block;
  width: 1px;
  height: 100%;
  margin-left: 59.8%;
  background: #1c6b55;
  border: solid #6df0cf;
  border-width: 1px 0;
}

.marks {
  display: flex;
}

.marks i {
  width: 16px;
  height: 5px;
  margin-left: 47.9%;
}

.marks.top i {
  align-self: flex-end;
  background:
    linear-gradient(135deg, #ff0 50%, transparent 50%) left / 5px 5px no-repeat,
    linear-gradient(-135deg, #ff0 50%, transparent 50%) right / 5px 5px no-repeat;
}

.marks.bottom i {
  background:
    linear-gradient(45deg, #ff0 50%, transparent 50%) left / 5px 5px no-repeat,
    linear-gradient(-45deg, #ff0 50%, transparent 50%) right / 5px 5px no-repeat;
}

.channel {
  position: relative;
  background: #000c15;
  border-top: 1px solid var(--dark);
  border-bottom: 1px solid var(--light);
}

.channel canvas {
  width: 100%;
  height: 100%;
}

.selection {
  position: absolute;
  top: 0;
  bottom: 0;
  left: 47.9%;
  width: 16px;
  background: rgba(255, 255, 255, 0.42);
}

.ruler-f,
.ruler-t {
  position: relative;
  background: var(--well);
  font-size: 9px;
  text-shadow: 1px 1px 0 #111;
}

.ruler-f {
  border: 1px solid;
  border-color: var(--dark) var(--light) var(--light);
}

.ruler-t {
  border-right: 1px solid var(--light);
  border-bottom: 1px solid var(--light);
}

.ruler-f span,
.ruler-f i {
  position: absolute;
  transform: translateY(-50%);
}

.ruler-f span {
  left: 5px;
}

.ruler-f i {
  left: 0;
  width: 1px;
  height: 1px;
  background: #e6e8eb;
}

.ruler-f .major {
  width: 3px;
}

.ruler-t span,
.ruler-t i {
  position: absolute;
}

.ruler-t span {
  top: 5px;
  transform: translateX(-50%);
}

.ruler-t .unit {
  left: 1px;
  transform: none;
}

.ruler-t .unit + .unit {
  left: auto;
  right: 2px;
}

.ruler-t i,
.meter-scale i {
  top: 0;
  width: 1px;
  height: 2px;
  background: #e6e8eb;
}

.ruler-t .major,
.meter-scale .major {
  height: 4px;
}

/* Lower panels */
.panels {
  flex: none;
  display: flex;
  height: 56px;
  background: var(--panel);
}

.transport,
.zoom {
  display: grid;
  grid-template-rows: 23px 23px;
  align-content: center;
}

.transport {
  grid-template-columns: repeat(5, 29px);
  margin-right: 5px;
}

.zoom {
  grid-template-columns: repeat(3, 29px);
}

.zoom.vertical {
  grid-template-columns: 29px;
  margin: 0 4px 0 7px;
}

.transport .tool,
.zoom .tool {
  width: 29px;
}

.transport svg,
.zoom svg {
  width: 27px;
}

.clock {
  flex: 1;
  padding-left: 6px;
  text-align: center;
  font-size: 46px;
  line-height: 54px;
  text-shadow: 1px 1px 0 #353b44;
}

.sel-view {
  display: grid;
  grid-template-columns: 32px repeat(3, 72px);
  grid-template-rows: 15px 17px 17px;
  gap: 2px 3px;
  align-items: center;
  padding: 0 6px 2px 0;
  text-shadow: 1px 1px 0 #333;
}

.sel-view .head {
  padding-left: 1px;
}

.sel-view .side {
  text-align: right;
}

.sel-view input {
  width: 72px;
  height: 17px;
  padding-left: 4px;
  background: var(--well);
  border: 1px solid;
  border-color: #15191e var(--light) var(--light) #15191e;
  font-size: 12px;
}

.sel-view .len {
  padding-left: 7px;
}

/* Level meter */
.levels {
  flex: none;
  display: flex;
  height: 37px;
  background: var(--panel);
}

.levels .grip-v {
  margin-right: 4px;
}

.meter {
  flex: 1;
  padding: 1px 4px 0 0;
}

.meter-row {
  display: flex;
  height: 16px;
}

.meter-bar {
  flex: 1;
  background: #000;
  border: solid var(--dark);
  border-width: 1px 0 0 1px;
  border-bottom: 1px solid var(--light);
}

.meter-bar i {
  display: block;
  width: 1px;
  height: 14px;
  margin-left: 1px;
  background: linear-gradient(#ff0 6px, #000 6px 8px, #ff0 8px);
}

.clip {
  display: grid;
  width: 20px;
  gap: 1px;
  padding: 1px;
  background: #d5d9df;
}

.clip i {
  background: #000;
}

.meter-scale {
  position: relative;
  height: 20px;
  margin-right: 21px;
  font-size: 9px;
  color: #d3d7dd;
  text-shadow: 1px 1px 0 #333;
}

.meter-scale span,
.meter-scale i {
  position: absolute;
}

.meter-scale span {
  top: 5px;
  transform: translateX(-50%);
}

/* Status bar */
.status-bar {
  flex: none;
  display: flex;
  align-items: center;
  gap: 3px;
  height: 21px;
  padding-left: 2px;
  background: var(--menu);
  border-top: 1px solid #fff;
  color: #000;
  white-space: nowrap;
}

.state {
  flex: 1;
}

.cell {
  height: 18px;
  padding-left: 4px;
  line-height: 16px;
  border: 1px solid;
  border-color: #808080 #fff #fff #808080;
}

.pos {
  width: 134px;
}

.format {
  width: 132px;
}

.size {
  width: 66px;
}

.free {
  width: 133px;
}
```
FILE: script.js
```js
const START = 620.3;   // ms after 26:13, left edge of the view
const SPAN = 68.85;    // ms shown
const TOP_HZ = 48150;

function add(parent, tag, prop, percent, text, className) {
  const el = document.createElement(tag);
  el.style[prop] = percent + '%';
  if (text) el.textContent = text;
  if (className) el.className = className;
  parent.appendChild(el);
}

// time ruler
const timeRuler = document.getElementById('timeRuler');
for (let ms = Math.ceil(START); ms < START + SPAN; ms++) {
  const x = (ms - START) / SPAN * 100;
  const major = ms % 5 === 0;
  add(timeRuler, 'i', 'left', x, '', major ? 'major' : '');
  if (major && ms < 689) add(timeRuler, 'span', 'left', x, '26:13.' + ms);
}

// frequency rulers
document.querySelectorAll('.ruler-f').forEach(ruler => {
  for (let hz = 0; hz <= 48000; hz += 1000) {
    const y = 99.5 - hz / TOP_HZ * 99.5;
    const major = hz % 5000 === 0;
    add(ruler, 'i', 'top', y, '', major ? 'major' : '');
    if (major && hz > 0) add(ruler, 'span', 'top', y, String(hz));
  }
  add(ruler, 'span', 'top', ruler.dataset.unit === 'top' ? 1 : 98.4, 'Hz');
});

// level scale
const dbRuler = document.getElementById('dbRuler');
add(dbRuler, 'span', 'left', 0.3, 'dB');
for (let step = -71 * 5; step <= 0; step++) {
  const x = 100 + step / 5 * 100 / 72.1;
  const major = step % 5 === 0;
  add(dbRuler, 'i', 'left', x, '', major ? 'major' : '');
  if (major) add(dbRuler, 'span', 'left', x, String(step / 5));
}

// preview volume scale
const volumeScale = document.getElementById('volumeScale');
[['-∞', 3], ['-12', 15], ['-6', 27], ['-3', 36], ['0', 51], ['3', 70], ['5', 87]].forEach(([text, x]) => {
  add(volumeScale, 'i', 'left', x, '', 'major');
  add(volumeScale, 'span', 'left', x, text);
});
[17, 19, 21, 23, 25, 30, 33, 40, 44, 48, 57, 63, 75, 79, 83, 91, 95].forEach(x => add(volumeScale, 'i', 'left', x));

// spectrogram
const palette = [
  [0, 0, 12, 21], [0.12, 0, 10, 19], [0.2, 0, 0, 34], [0.34, 22, 0, 52],
  [0.48, 64, 0, 84], [0.64, 122, 0, 116], [0.82, 160, 0, 92], [1, 232, 0, 56]
];

function colour(v) {
  v = Math.max(0, Math.min(1, v));
  let i = 1;
  while (palette[i][0] < v) i++;
  const a = palette[i - 1], b = palette[i];
  const t = (v - a[0]) / (b[0] - a[0]);
  return [1, 2, 3].map(k => a[k] + (b[k] - a[k]) * t);
}

function hash(x, y, seed) {
  let h = Math.imul(x, 374761393) + Math.imul(y, 668265263) + Math.imul(seed, 974634777);
  h = Math.imul(h ^ (h >>> 13), 1274126177);
  return ((h ^ (h >>> 16)) >>> 0) / 4294967295;
}

function noise(x, y, seed) {
  const xi = Math.floor(x), yi = Math.floor(y);
  let u = x - xi, v = y - yi;
  u = u * u * (3 - 2 * u);
  v = v * v * (3 - 2 * v);
  const top = hash(xi, yi, seed) * (1 - u) + hash(xi + 1, yi, seed) * u;
  const bottom = hash(xi, yi + 1, seed) * (1 - u) + hash(xi + 1, yi + 1, seed) * u;
  return top * (1 - v) + bottom * v;
}

function curve(points, y) {
  let i = 1;
  while (i < points.length - 1 && points[i][0] < y) i++;
  const a = points[i - 1], b = points[i];
  return a[1] + (b[1] - a[1]) * Math.min(1, Math.max(0, (y - a[0]) / (b[0] - a[0])));
}

const floorLevel = [[0, 0.07], [0.35, 0.09], [0.48, 0.15], [0.56, 0.22], [0.66, 0.28], [0.9, 0.31], [1, 0.34]];
const channels = {
  left: {
    seed: 3,
    click: [[0, 0.03], [0.1, 0.08], [0.25, 0.12], [0.4, 0.08], [0.55, 0.03], [0.65, 0.1], [0.8, 0.09], [1, 0.08]],
    width: 36
  },
  right: {
    seed: 8,
    click: [[0, 0.03], [0.1, 0.07], [0.2, 0.12], [0.38, 0.16], [0.48, 0.28], [0.6, 0.33], [0.7, 0.34], [0.8, 0.36], [0.9, 0.43], [1, 0.46]],
    width: 54
  }
};

function drawChannel(id) {
  const canvas = document.getElementById(id);
  const w = canvas.width = canvas.clientWidth;
  const h = canvas.height = canvas.clientHeight;
  const ctx = canvas.getContext('2d');
  const image = ctx.createImageData(w, h);
  const { seed, click, width } = channels[id];

  for (let y = 0; y < h; y++) {
    const f = y / h;
    const base = curve(floorLevel, f);
    const burst = curve(click, f);
    const spread = width * (0.75 + 0.35 * f);
    const swing = 0.05 + 0.33 * Math.min(1, Math.max(0, (f - 0.34) / 0.35));
    for (let x = 0; x < w; x++) {
      const bend = y + 4 * noise(x / 130, y / 40, seed + 5);
      const streak = noise(x / 75, bend / 3, seed) * 0.6 + noise(x / 50, bend / 1.4, seed + 1) * 0.4;
      const cloud = noise(x / 110, y / 35, seed + 2) - 0.5;
      const d = Math.abs(x - w * 0.485) / spread;
      const hit = Math.exp(-Math.pow(d, 3));
      let v = base + cloud * 0.07 + (streak - 0.5) * swing * (1 - 0.75 * hit * (id === 'right')) + burst * hit;
      if (id === 'right') {
        const g = (x - w * 0.863) / 38;
        v += 0.1 * Math.exp(-g * g) * Math.min(1, Math.max(0, (f - 0.6) * 3));
      } else {
        const g = (x - w * 0.09) / 60;
        v += 0.05 * Math.exp(-g * g) * Math.min(1, Math.max(0, (f - 0.3) * 4));
      }
      // low end hugging the bottom edge
      const low = h - y;
      if (low < 6) v += (6 - low) * (0.07 + 0.06 * noise(x / 60, 0, seed + 4));
      const c = colour(v);
      const p = (y * w + x) * 4;
      image.data[p] = c[0];
      image.data[p + 1] = c[1];
      image.data[p + 2] = c[2];
      image.data[p + 3] = 255;
    }
  }
  ctx.putImageData(image, 0, 0);
}

function draw() {
  drawChannel('left');
  drawChannel('right');
}

draw();
window.addEventListener('resize', draw);
```
